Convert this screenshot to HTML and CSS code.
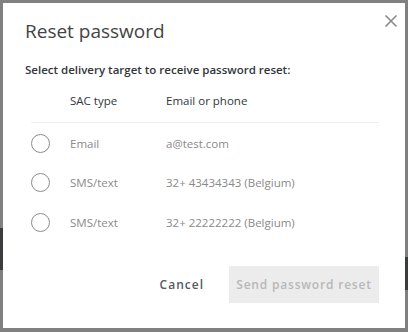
FILE: index.html
```html
<!DOCTYPE html>
<html>
<head>
<meta charset="utf-8">
<link rel="stylesheet" href="styles.css">
</head>
<body>
<div class="backdrop">
  <span class="peek peek-left"></span>
  <span class="peek peek-right"></span>
  <div class="dialog">
    <button class="close" aria-label="Close">
      <svg width="14" height="14" viewBox="0 0 14 14"><path d="M1.5 1.5 L12.5 12.5 M12.5 1.5 L1.5 12.5" stroke="#8a8a8a" stroke-width="1.6" fill="none"/></svg>
    </button>
    <h1 class="title">Reset password</h1>
    <p class="lead">Select delivery target to receive password reset:</p>
    <div class="table">
      <div class="row head">
        <span class="cell-radio"></span>
        <span class="cell-type">SAC type</span>
        <span class="cell-target">Email or phone</span>
      </div>
      <div class="row">
        <span class="cell-radio"><span class="radio"></span></span>
        <span class="cell-type">Email</span>
        <span class="cell-target">a@test.com</span>
      </div>
      <div class="row">
        <span class="cell-radio"><span class="radio"></span></span>
        <span class="cell-type">SMS/text</span>
        <span class="cell-target">32+ 43434343 (Belgium)</span>
      </div>
      <div class="row">
        <span class="cell-radio"><span class="radio"></span></span>
        <span class="cell-type">SMS/text</span>
        <span class="cell-target">32+ 22222222 (Belgium)</span>
      </div>
    </div>
    <div class="actions">
      <button class="btn btn-cancel">Cancel</button>
      <button class="btn btn-primary" disabled>Send password reset</button>
    </div>
  </div>
</div>
</body>
</html>
```
FILE: styles.css
```css
* { box-sizing: border-box; }
html, body { margin: 0; padding: 0; }
body {
  width: 408px;
  height: 332px;
  overflow: hidden;
  font-family: "Open Sans", "Liberation Sans", sans-serif;
}
.backdrop {
  position: relative;
  width: 408px;
  height: 332px;
  background: #808080;
  padding: 3px 3px 4px 3px;
  display: flex;
}
.peek {
  position: absolute;
  background: #3a3c3e;
  width: 3px;
}
.peek-left { left: 0; top: 228px; height: 42px; }
.peek-right { right: 0; top: 257px; height: 33px; }
.dialog {
  position: relative;
  flex: 1;
  background: #fff;
  padding: 15px 26px 0 22px;
  display: flex;
  flex-direction: column;
}
.close {
  position: absolute;
  top: 11px;
  right: 7px;
  border: 0;
  background: none;
  padding: 0;
  width: 14px;
  height: 14px;
  display: flex;
}
.title {
  margin: 0;
  font-size: 19px;
  font-weight: 400;
  color: #444;
  line-height: 26px;
}
.lead {
  margin: 18px 0 0 0;
  font-size: 11.5px;
  font-weight: 600;
  color: #32363a;
  line-height: 16px;
}
.table {
  margin-top: 15px;
  display: flex;
  flex-direction: column;
  padding-left: 6px;
}
.row {
  display: flex;
  align-items: center;
  height: 39.5px;
  font-size: 11.5px;
  color: #8a8a8a;
}
.row.head {
  height: 30px;
  align-items: flex-start;
  color: #32363a;
  border-bottom: 1px solid #ededed;
}
.row:nth-child(2) { margin-top: 0.5px; }
.cell-radio { width: 39px; display: flex; align-items: center; }
.cell-type { width: 96px; }
.radio {
  width: 19px;
  height: 19px;
  border: 1.5px solid #8c8c8c;
  border-radius: 50%;
  display: block;
}
.actions {
  margin-top: 24px;
  display: flex;
  justify-content: flex-end;
  align-items: center;
  gap: 25px;
}
.btn {
  font-family: "Open Sans", "Liberation Sans", sans-serif;
  font-size: 12px;
  font-weight: 600;
  letter-spacing: 0.8px;
  border: 0;
  padding: 0;
  background: none;
}
.btn-cancel { color: #555a5e; letter-spacing: 1px; }
.btn-primary {
  background: #ececec;
  color: #b8b8b8;
  width: 150px;
  height: 37px;
}
```
